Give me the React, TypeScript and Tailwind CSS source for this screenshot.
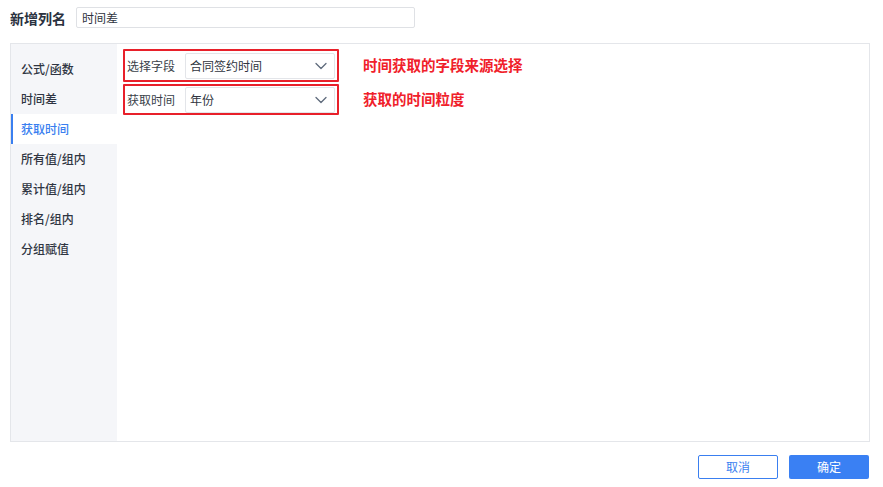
import React from "react";

const Chevron = () => (
  <svg width="12" height="8" viewBox="0 0 12 8" fill="none" className="shrink-0">
    <path d="M1 1.5 L6 6.5 L11 1.5" stroke="#5f6b7c" strokeWidth="1.3" strokeLinecap="round" strokeLinejoin="round" />
  </svg>
);

const Row = ({ label, value, h }: { label: string; value: string; h: string }) => (
  <div className={`w-[216px] ${h} border-[2px] border-[#e8202a] rounded-[1px] flex items-center pl-[2px] pr-[2px]`}>
    <span className="w-[58px] text-[12px] text-[#3a3f4a] leading-none">{label}</span>
    <div className="flex-1 h-[26px] border border-[#e3e5e9] rounded-[2px] flex items-center justify-between pl-[4px] pr-[7px] bg-white">
      <span className="text-[12px] text-[#2f3440] leading-none">{value}</span>
      <Chevron />
    </div>
  </div>
);

export default function App() {
  const items = ["公式/函数", "时间差", "获取时间", "所有值/组内", "累计值/组内", "排名/组内", "分组赋值"];
  return (
    <div
      className="w-[883px] h-[487px] bg-white relative overflow-hidden"
      style={{ fontFamily: '"Noto Sans CJK SC", "Noto Sans", sans-serif' }}
    >
      <div className="flex items-center pt-[7px] pl-[10px]">
        <span className="w-[66px] text-[14px] font-bold text-[#2b3240] leading-none">新增列名</span>
        <div className="w-[339px] h-[21px] border border-[#dfe1e5] rounded-[2px] flex items-center pl-[5px]">
          <span className="text-[12px] text-[#2f3440] leading-none">时间差</span>
        </div>
      </div>

      <div className="mt-[15px] ml-[10px] w-[860px] h-[399px] border border-[#e4e6ea] flex">
        <div className="w-[106px] bg-[#f5f6f9] pt-[10px]">
          {items.map((it, i) => {
            const active = i === 2;
            return (
              <div
                key={it}
                className={
                  "h-[30px] flex items-center text-[12px] font-medium leading-none " +
                  (active ? "bg-white text-[#3a7ff0] border-l-[2px] border-[#3a7ff0] pl-[8px]" : "text-[#2f3542] pl-[10px]")
                }
              >
                {it}
              </div>
            );
          })}
        </div>
        <div className="flex-1 pt-[5px] pl-[6px]">
          <div className="flex items-center">
            <Row label="选择字段" value="合同签约时间" h="h-[33px]" />
            <span className="ml-[24px] text-[14.5px] font-bold text-[#f0202a] leading-none">时间获取的字段来源选择</span>
          </div>
          <div className="flex items-center mt-[2px]">
            <Row label="获取时间" value="年份" h="h-[31px]" />
            <span className="ml-[24px] text-[14.5px] font-bold text-[#f0202a] leading-none">获取的时间粒度</span>
          </div>
        </div>
      </div>

      <div className="flex justify-end gap-[11px] pr-[14px] mt-[13px]">
        <button className="w-[80px] h-[24px] border border-[#3a7ff0] rounded-[2px] text-[12px] text-[#3a7ff0] bg-white leading-none">
          取消
        </button>
        <button className="w-[80px] h-[24px] rounded-[2px] text-[12px] text-white bg-[#3a80f3] leading-none">
          确定
        </button>
      </div>
    </div>
  );
}
